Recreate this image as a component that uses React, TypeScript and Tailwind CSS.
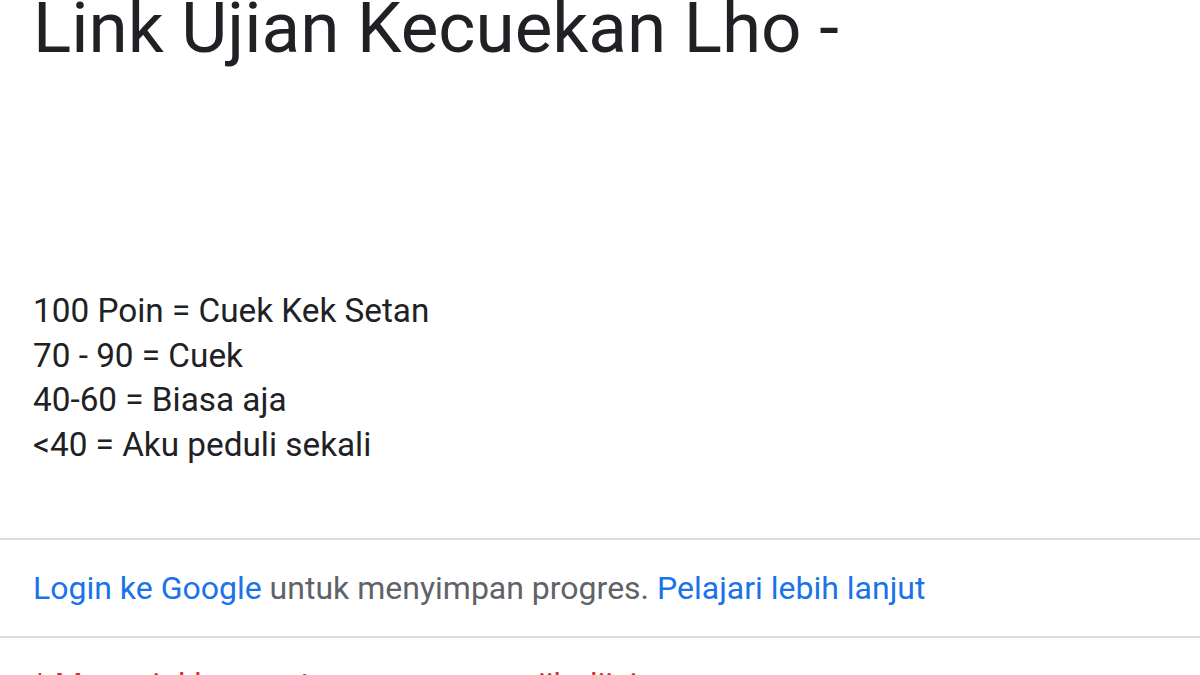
const App = () => {
  return (
    <div
      className="w-[1200px] h-[675px] overflow-hidden bg-white"
      style={{ fontFamily: "Roboto, 'Noto Sans', sans-serif" }}
    >
      <div className="px-[33px] -mt-[16px]">
        <h1 className="text-[71px] leading-[88px] text-[#202124] font-normal whitespace-nowrap">
          Link Ujian Kecuekan Lho -
        </h1>
      </div>
      <div className="px-[33px] pt-[217px] pb-[70px] text-[33.3px] leading-[44.7px] text-[#202124]">
        <div>100 Poin = Cuek Kek Setan</div>
        <div>70 - 90 = Cuek</div>
        <div>40-60 = Biasa aja</div>
        <div>&lt;40 = Aku peduli sekali</div>
      </div>
      <div className="border-t-2 border-[#dadce0] px-[33px] py-[26px] text-[32px] leading-[44px] text-[#5f6368] whitespace-nowrap">
        <a href="#" className="text-[#1a73e8]">
          Login ke Google
        </a>{" "}
        untuk menyimpan progres.{" "}
        <a href="#" className="text-[#1a73e8]">
          Pelajari lebih lanjut
        </a>
      </div>
      <div className="border-t-2 border-[#dadce0] px-[33px] pt-[24px] text-[32px] leading-[44px] text-[#d93025] whitespace-nowrap">
        * Menunjukkan pertanyaan yang wajib diisi
      </div>
    </div>
  );
};

export default App;
